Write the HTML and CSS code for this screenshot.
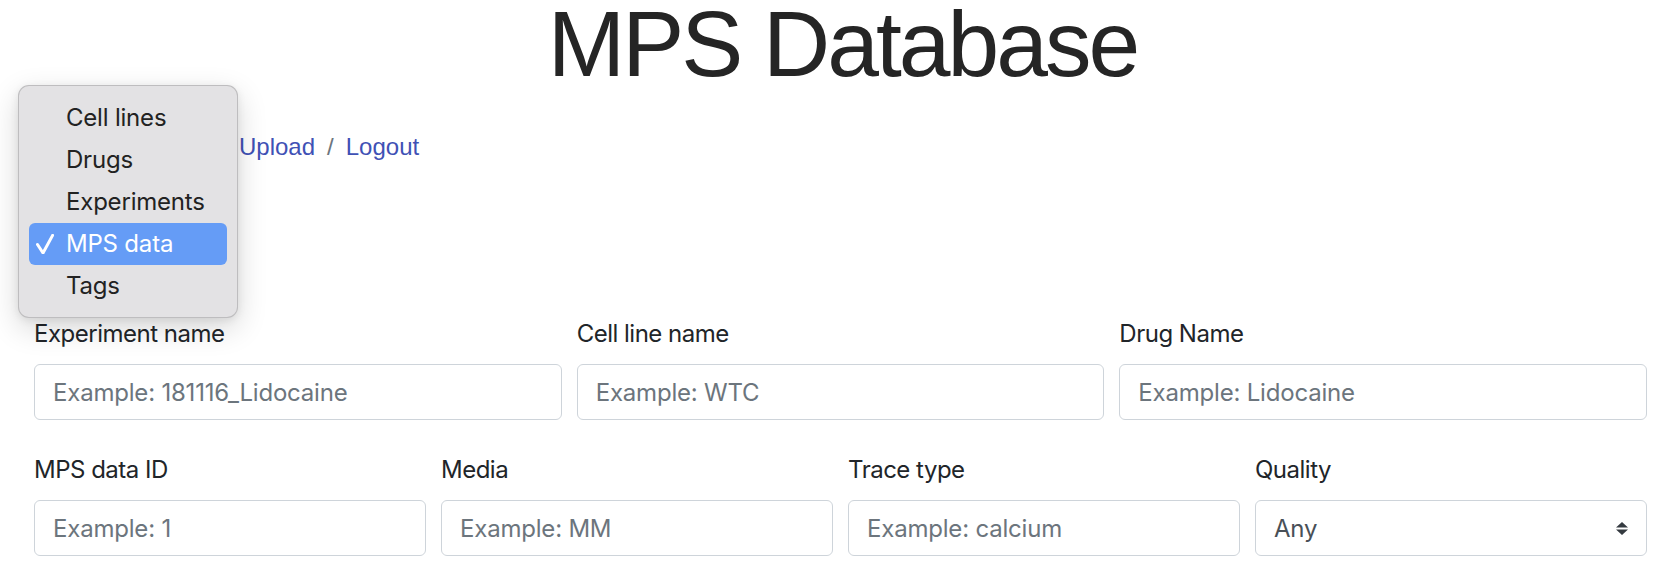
FILE: index.html
```html
<!DOCTYPE html>
<html lang="en">
<head>
<meta charset="utf-8">
<title>MPS Database</title>
<link rel="stylesheet" href="styles.css">
</head>
<body>
<div class="page">
  <h1 class="title">MPS Database</h1>
  <nav class="crumbs">
    <a class="crumb" href="#">Upload</a>
    <span class="divider">/</span>
    <a class="crumb" href="#">Logout</a>
  </nav>

  <form class="search">
    <div class="form-row cols-3">
      <div class="field">
        <label class="label">Experiment name</label>
        <input class="input" type="text" placeholder="Example: 181116_Lidocaine">
      </div>
      <div class="field">
        <label class="label">Cell line name</label>
        <input class="input" type="text" placeholder="Example: WTC">
      </div>
      <div class="field">
        <label class="label">Drug Name</label>
        <input class="input" type="text" placeholder="Example: Lidocaine">
      </div>
    </div>
    <div class="form-row cols-4">
      <div class="field">
        <label class="label">MPS data ID</label>
        <input class="input" type="text" placeholder="Example: 1">
      </div>
      <div class="field">
        <label class="label">Media</label>
        <input class="input" type="text" placeholder="Example: MM">
      </div>
      <div class="field">
        <label class="label">Trace type</label>
        <input class="input" type="text" placeholder="Example: calcium">
      </div>
      <div class="field">
        <label class="label">Quality</label>
        <div class="input select">
          <span class="select-value">Any</span>
          <svg class="select-arrow" width="12" height="13" viewBox="0 0 12 13"><path d="M6 0L12 5.5H0Z M6 13L0 7.5H12Z" fill="#343a40"/></svg>
        </div>
      </div>
    </div>
  </form>

  <div class="menu">
    <div class="menu-item"><span class="check"></span>Cell lines</div>
    <div class="menu-item"><span class="check"></span>Drugs</div>
    <div class="menu-item"><span class="check"></span>Experiments</div>
    <div class="menu-item selected"><span class="check"><svg width="18" height="20" viewBox="0 0 18 20"><path d="M1.5 10.5L7 19L16.6 1.4" fill="none" stroke="#fff" stroke-width="3" stroke-linecap="round" stroke-linejoin="round"/></svg></span>MPS data</div>
    <div class="menu-item"><span class="check"></span>Tags</div>
  </div>
</div>
</body>
</html>
```

FILE: styles.css
```css
html, body {
  margin: 0;
  padding: 0;
  background: #fff;
}

body {
  font-family: Inter, "Noto Sans", sans-serif;
  color: #212529;
}

.page {
  position: relative;
  padding: 0 33px 0 34px;
}

.title {
  margin: 0;
  padding-left: 4px;
  text-align: center;
  font-family: "Liberation Sans", Arial, sans-serif;
  font-weight: 400;
  font-size: 93px;
  line-height: 88px;
  letter-spacing: -3px;
  color: #252525;
}

.crumbs {
  display: flex;
  margin-top: 41px;
  padding-left: 205px;
  font-family: "Liberation Sans", Arial, sans-serif;
  font-size: 24px;
  line-height: 36px;
}

.crumb {
  color: #3f51b5;
  text-decoration: none;
}

.divider {
  padding: 0 12px;
  color: #6c757d;
}

.search {
  margin-top: 151px;
}

.form-row {
  display: grid;
  column-gap: 15px;
}

.form-row + .form-row {
  margin-top: 32px;
}

.cols-3 {
  grid-template-columns: repeat(3, 1fr);
}

.cols-4 {
  grid-template-columns: repeat(4, 1fr);
}

.label {
  display: block;
  margin-bottom: 12px;
  font-size: 24px;
  line-height: 36px;
  letter-spacing: -0.5px;
  color: #212529;
}

.input {
  display: block;
  box-sizing: border-box;
  width: 100%;
  height: 56px;
  margin: 0;
  padding: 0 18px;
  border: 1px solid #ced4da;
  border-radius: 6px;
  background: #fff;
  font-family: Inter, "Noto Sans", sans-serif;
  font-size: 24px;
  letter-spacing: -0.2px;
  color: #495057;
  outline: none;
}

.input::placeholder {
  color: #6c757d;
  opacity: 1;
}

.select {
  display: flex;
  align-items: center;
  justify-content: space-between;
}

.select-arrow {
  display: block;
  margin-top: 1px;
}

.menu {
  position: absolute;
  left: 18px;
  top: 85px;
  width: 220px;
  box-sizing: border-box;
  padding: 11px 10px 10px 10px;
  background: #e3e2e4;
  border: 1px solid rgba(0, 0, 0, 0.16);
  border-radius: 11px;
  box-shadow: 0 10px 30px rgba(0, 0, 0, 0.16), 0 2px 8px rgba(0, 0, 0, 0.08);
}

.menu-item {
  display: flex;
  align-items: center;
  height: 42px;
  padding-left: 7px;
  border-radius: 6px;
  font-size: 24px;
  line-height: 42px;
  letter-spacing: -0.2px;
  color: #222;
}

.menu-item.selected {
  background: #659cf6;
  color: #fff;
}

.check {
  display: flex;
  align-items: center;
  width: 30px;
  height: 42px;
}

.check svg {
  display: block;
}
```
